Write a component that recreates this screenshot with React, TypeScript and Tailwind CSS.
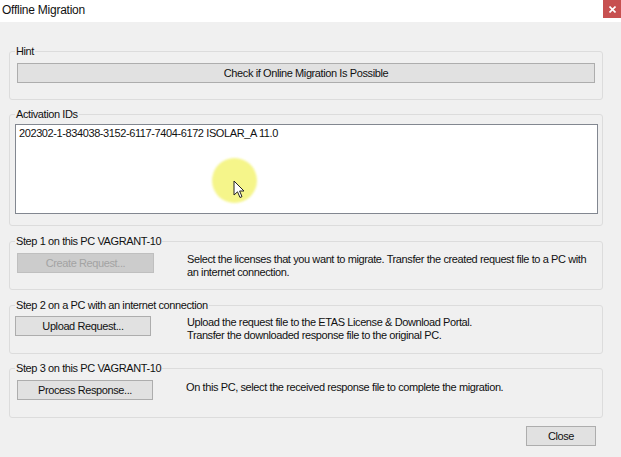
import React from 'react';

const font = { fontFamily: '"Liberation Sans", Arial, sans-serif' };

function GroupBox({ title, outer, className, children }: { title: string; outer?: string; className?: string; children: React.ReactNode }) {
    return (
        <fieldset className={`ml-[9px] w-[594px] border border-[#dcdcdc] rounded-[3px] ${outer ?? ''}`}>
            <legend className="ml-[5px] px-[1px] text-[11px] leading-[13px] tracking-[-0.4px] text-[#111]">{title}</legend>
            <div className={className}>{children}</div>
        </fieldset>
    );
}

function WinButton({ label, disabled, className }: { label: string; disabled?: boolean; className?: string }) {
    return (
        <button
            disabled={disabled}
            className={`h-[20px] shrink-0 border text-[11px] leading-[18px] tracking-[-0.4px] ${
                disabled ? 'bg-[#cccccc] border-[#bfbfbf] text-[#a3a3a3]' : 'bg-[#e1e1e1] border-[#adadad] text-[#111]'
            } ${className ?? ''}`}
        >
            {label}
        </button>
    );
}

export default function App() {
    return (
        <div className="relative w-[621px] h-[457px] overflow-hidden bg-[#f0f0f0]" style={font}>
            {/* Title bar */}
            <div className="flex h-[22px] items-start justify-between bg-white">
                <span className="pl-[2px] pt-[3px] text-[12px] leading-[14px] tracking-[-0.25px] text-[#111]">Offline Migration</span>
                <div className="flex h-[18px] w-[18px] items-center justify-center bg-[#c75050]">
                    <svg width="7" height="7" viewBox="0 0 7 7">
                        <path d="M0.5 0.5 L6.5 6.5 M6.5 0.5 L0.5 6.5" stroke="white" strokeWidth="1.6" />
                    </svg>
                </div>
            </div>

            <div className="flex flex-col pt-[23px]">
                {/* Hint */}
                <GroupBox title="Hint" className="px-[7px] pb-[15px]">
                    <WinButton label="Check if Online Migration Is Possible" className="mt-[5px] w-full bg-[#dcdcdc]" />
                </GroupBox>

                {/* Activation IDs */}
                <GroupBox title="Activation IDs" outer="mt-[8px]" className="pl-[5px] pr-[4px] pb-[11px]">
                    <div className="mt-[3px] h-[90px] border border-[#828790] bg-white px-[3px] pt-[2px] text-[11px] leading-[13px] tracking-[-0.4px] text-[#111]">
                        202302-1-834038-3152-6117-7404-6172 ISOLAR_A 11.0
                    </div>
                </GroupBox>

                {/* Step 1 */}
                <GroupBox title="Step 1 on this PC VAGRANT-10" outer="mt-[9px]" className="pl-[7px] pb-[16px]">
                    <div className="mt-[5px] flex h-[20px] items-start">
                        <WinButton label="Create Request..." disabled className="w-[137px]" />
                        <p className="ml-[33px] text-[11px] leading-[13px] tracking-[-0.4px] text-[#111]">
                            Select the licenses that you want to migrate. Transfer the created request file to a PC with
                            <br />
                            an internet connection.
                        </p>
                    </div>
                </GroupBox>

                {/* Step 2 */}
                <GroupBox title="Step 2 on a PC with an internet connection" outer="mt-[9px]" className="pl-[5px] pb-[17px]">
                    <div className="mt-[4px] flex h-[20px] items-start">
                        <WinButton label="Upload Request..." className="w-[136px]" />
                        <p className="ml-[36px] text-[11px] leading-[13px] tracking-[-0.4px] text-[#111]">
                            Upload the request file to the ETAS License &amp; Download Portal.
                            <br />
                            Transfer the downloaded response file to the original PC.
                        </p>
                    </div>
                </GroupBox>

                {/* Step 3 */}
                <GroupBox title="Step 3 on this PC VAGRANT-10" outer="mt-[8px]" className="pl-[7px] pb-[17px]">
                    <div className="mt-[5px] flex h-[20px] items-start">
                        <WinButton label="Process Response..." className="w-[136px]" />
                        <p className="ml-[33px] pt-[1px] text-[11px] leading-[13px] tracking-[-0.4px] text-[#111]">
                            On this PC, select the received response file to complete the migration.
                        </p>
                    </div>
                </GroupBox>

                <div className="mt-[8px] flex w-[603px] justify-end pr-[7px]">
                    <WinButton label="Close" className="w-[70px]" />
                </div>
            </div>

            {/* cursor highlight */}
            <div className="absolute left-[212px] top-[158px] h-[45px] w-[45px] rounded-full bg-[#f5f58a] blur-[1px]" />
            <svg className="absolute left-[233px] top-[180px]" width="12" height="19" viewBox="0 0 12 19">
                <path d="M1 1 L1 15 L4.5 11.8 L7 17.5 L9 16.6 L6.6 11 L11 11 Z" fill="white" stroke="#222" strokeWidth="1" strokeLinejoin="round" />
            </svg>
        </div>
    );
}
